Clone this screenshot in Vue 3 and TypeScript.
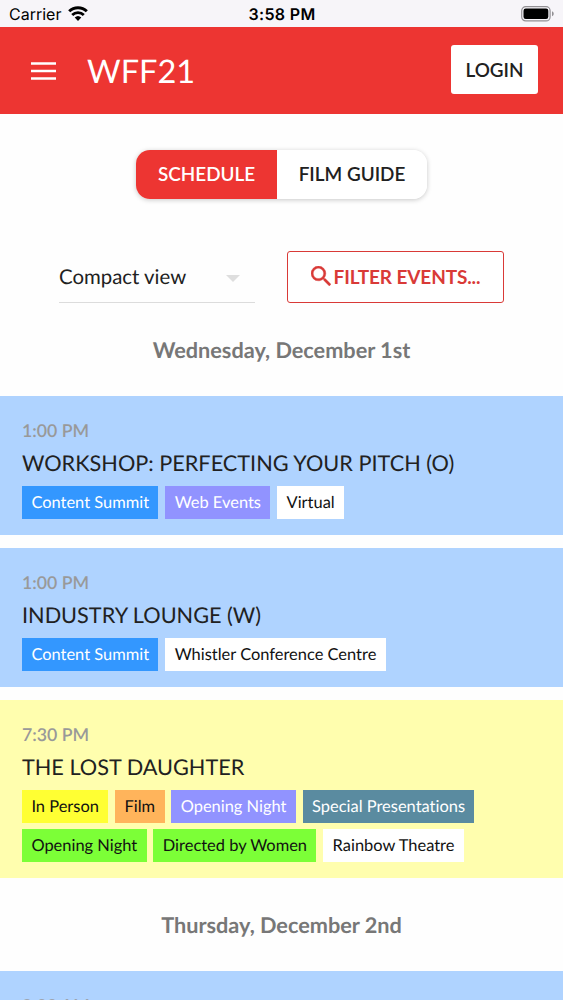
<script setup lang="ts">
interface Tag {
  label: string
  tone: string
}

interface FestivalEvent {
  time: string
  title: string
  tone: string
  tags: Tag[]
}

interface Day {
  label: string
  events: FestivalEvent[]
}

const days: Day[] = [
  {
    label: 'Wednesday, December 1st',
    events: [
      {
        time: '1:00 PM',
        title: 'WORKSHOP: PERFECTING YOUR PITCH (O)',
        tone: 'sky',
        tags: [
          { label: 'Content Summit', tone: 'blue' },
          { label: 'Web Events', tone: 'violet' },
          { label: 'Virtual', tone: 'white' },
        ],
      },
      {
        time: '1:00 PM',
        title: 'INDUSTRY LOUNGE (W)',
        tone: 'sky',
        tags: [
          { label: 'Content Summit', tone: 'blue' },
          { label: 'Whistler Conference Centre', tone: 'white' },
        ],
      },
      {
        time: '7:30 PM',
        title: 'THE LOST DAUGHTER',
        tone: 'cream',
        tags: [
          { label: 'In Person', tone: 'yellow' },
          { label: 'Film', tone: 'orange' },
          { label: 'Opening Night', tone: 'violet' },
          { label: 'Special Presentations', tone: 'teal' },
          { label: 'Opening Night', tone: 'green' },
          { label: 'Directed by Women', tone: 'green' },
          { label: 'Rainbow Theatre', tone: 'white' },
        ],
      },
    ],
  },
  {
    label: 'Thursday, December 2nd',
    events: [{ time: '9:00 AM', title: '', tone: 'sky', tags: [] }],
  },
]
</script>

<template>
  <div class="screen">
    <div class="status">
      <div class="carrier">
        <span>Carrier</span>
        <svg class="wifi" viewBox="0 0 20 15" width="20" height="15">
          <path d="M1.2 5.3a12.6 12.6 0 0 1 17.6 0" fill="none" stroke="#000" stroke-width="3" />
          <path d="M4.2 8.9a8.3 8.3 0 0 1 11.6 0" fill="none" stroke="#000" stroke-width="2.8" />
          <path d="M6.7 11.6a4.8 4.8 0 0 1 6.6 0L10 15z" fill="#000" />
        </svg>
      </div>
      <span class="clock">3:58 PM</span>
      <svg class="battery" viewBox="0 0 34 16" width="34" height="16">
        <rect x=".7" y=".7" width="28.4" height="14.2" rx="4" fill="none" stroke="#929094" stroke-width="1.2" />
        <rect x="2.5" y="2.6" width="24.8" height="10.4" rx="2.2" fill="#000" />
        <path d="M31 5.3c2.3.8 2.3 4.2 0 5z" fill="#929094" />
      </svg>
    </div>

    <header class="bar">
      <svg class="burger" viewBox="0 0 25 18" width="25" height="18">
        <path d="M0 1.5h25M0 9h25M0 16.5h25" stroke="#fff" stroke-width="2.7" />
      </svg>
      <h1 class="brand">WFF21</h1>
      <button class="login">LOGIN</button>
    </header>

    <nav class="tabs">
      <button class="tab active">SCHEDULE</button>
      <button class="tab">FILM GUIDE</button>
    </nav>

    <div class="filters">
      <div class="select">
        <span>Compact view</span>
        <svg viewBox="0 0 14 7" width="14" height="7"><path d="M0 0h14L7 7z" fill="#dedede" /></svg>
      </div>
      <button class="filter">
        <svg viewBox="3 3 17.5 17.5" width="20" height="20">
          <path
            fill="currentColor"
            stroke="currentColor"
            stroke-width=".3"
            d="M15.5 14h-.79l-.28-.27A6.471 6.471 0 0 0 16 9.5A6.5 6.5 0 1 0 9.5 16c1.61 0 3.09-.59 4.23-1.57l.27.28v.79l5 4.99L20.49 19l-4.99-5zm-6 0C7.01 14 5 11.99 5 9.5S7.01 5 9.5 5 14 7.01 14 9.5 11.99 14 9.5 14z"
          />
        </svg>
        <span>FILTER EVENTS...</span>
      </button>
    </div>

    <section v-for="day in days" :key="day.label" class="day">
      <h2 class="date">{{ day.label }}</h2>
      <div class="events">
        <article v-for="(event, i) in day.events" :key="i" class="event" :class="event.tone">
          <div class="time">{{ event.time }}</div>
          <h3 class="title">{{ event.title }}</h3>
          <div class="tags">
            <span v-for="(tag, j) in event.tags" :key="j" class="tag" :class="tag.tone">{{ tag.label }}</span>
          </div>
        </article>
      </div>
    </section>
  </div>
</template>

<style>
body {
  margin: 0;
  background: #fff;
  overflow: hidden;
}
</style>

<style scoped>
.screen {
  height: 1000px;
  overflow: hidden;
  background: #fefefe;
  color: #212121;
  font-family: Lato, sans-serif;
  font-variant-ligatures: none;
  text-rendering: geometricPrecision;
}
button {
  border: 0;
  padding: 0;
  font: inherit;
  color: inherit;
}
h1,
h2,
h3 {
  margin: 0;
  font-weight: 400;
}
.status {
  display: grid;
  grid-template-columns: 1fr auto 1fr;
  align-items: center;
  height: 27px;
  padding: 1px 8px 0 9px;
  box-sizing: border-box;
  background: #f7f5f9;
  color: #000;
  font-family: Inter, sans-serif;
  font-size: 16px;
}
.carrier {
  display: flex;
  align-items: center;
  gap: 7px;
}
.wifi {
  margin-top: -2px;
}
.clock {
  font-weight: 600;
  letter-spacing: 0.35px;
}
.battery {
  justify-self: end;
}
.bar {
  display: flex;
  align-items: center;
  height: 87px;
  padding: 0 25px 0 31px;
  box-sizing: border-box;
  background: #ed3532;
}
.burger {
  margin-right: 31px;
}
.brand {
  flex: 1;
  margin-top: 1px;
  color: #fff;
  font-size: 32.5px;
  line-height: 40px;
}
.login {
  width: 87px;
  height: 49px;
  margin-top: -3px;
  border-radius: 3px;
  background: #fff;
  font-size: 18.9px;
  font-weight: 600;
}
.tabs {
  display: flex;
  width: 291px;
  height: 49px;
  margin: 36px auto 0;
  border-radius: 14px;
  overflow: hidden;
  background: #fff;
  box-shadow: 0 1px 5px rgba(0, 0, 0, 0.22);
}
.tab {
  flex: 1;
  padding-bottom: 2px;
  background: #fff;
  font-size: 18.9px;
  font-weight: 600;
}
.tab.active {
  flex: 0 0 141px;
  background: #ed3532;
  color: #fff;
}
.filters {
  display: flex;
  gap: 32px;
  margin: 52px 59px 0;
  height: 52px;
}
.select {
  display: flex;
  align-items: center;
  justify-content: space-between;
  width: 196px;
  padding: 0 15px 0 0;
  box-sizing: border-box;
  border-bottom: 1px solid #dcdcdc;
  font-size: 20.4px;
}
.select svg {
  margin-top: 3px;
}
.filter {
  display: flex;
  align-items: center;
  justify-content: center;
  gap: 3px;
  width: 217px;
  padding-bottom: 1px;
  box-sizing: border-box;
  border: 1.5px solid #d93a37;
  border-radius: 3px;
  background: #fff;
  color: #d93a37;
  font-size: 19px;
  font-weight: 700;
  letter-spacing: -0.12px;
}
.filter svg {
  margin-top: -1px;
}
.date {
  height: 93px;
  line-height: 94px;
  color: #777;
  text-align: center;
  font-size: 21.7px;
  font-weight: 700;
}
.events {
  display: flex;
  flex-direction: column;
  gap: 13.5px;
}
.event {
  padding: 22px 22px 16px;
}
.time {
  height: 24px;
  line-height: 25px;
  color: #999;
  font-size: 17.7px;
  font-weight: 600;
}
.title {
  height: 44px;
  line-height: 42px;
  font-size: 21.7px;
}
.tags {
  display: flex;
  flex-wrap: wrap;
  gap: 6.8px;
}
.tag {
  height: 32.5px;
  padding: 0 9.4px;
  line-height: 33px;
  font-size: 16.45px;
  color: #111;
}
.sky {
  background: #afd3ff;
}
.cream {
  background: #fffeae;
}
.blue {
  background: #3397ff;
  color: #fff;
}
.violet {
  background: #9193ff;
  color: #fff;
}
.teal {
  background: #5a8ba0;
  color: #fff;
}
.white {
  background: #fff;
}
.yellow {
  background: #ffff33;
}
.orange {
  background: #ffb45b;
}
.green {
  background: #7cff37;
}
</style>
